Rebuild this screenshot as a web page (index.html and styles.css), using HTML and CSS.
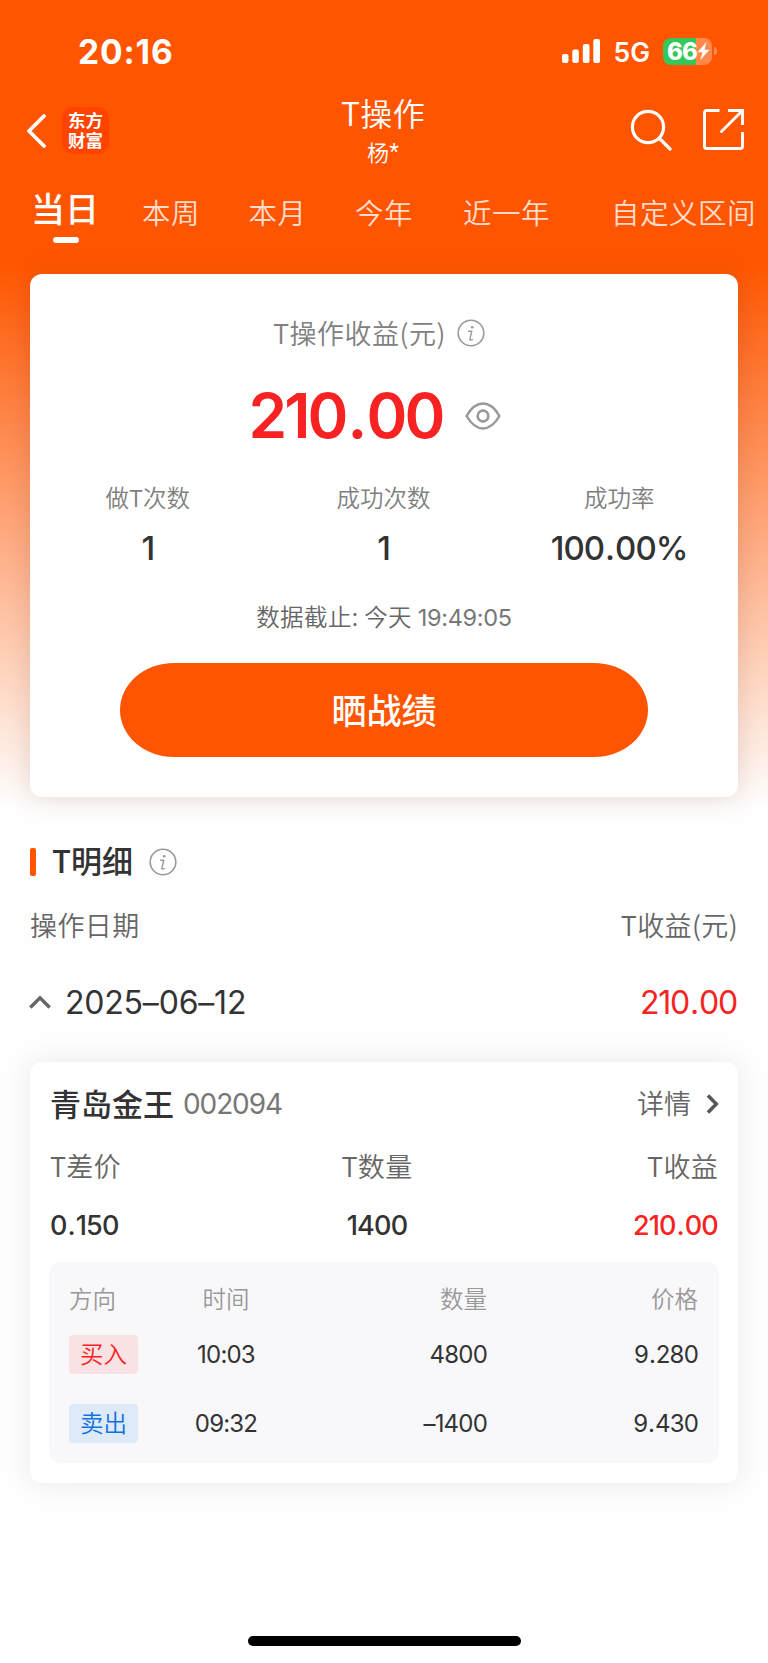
FILE: index.html
```html
<!DOCTYPE html>
<html lang="zh-CN">
<head>
<meta charset="utf-8">
<title>T操作</title>
<link rel="stylesheet" href="styles.css">
</head>
<body>
<div class="screen">
  <header class="status">
    <span class="clock">20:16</span>
    <div class="status-right">
      <svg class="signal" width="40" height="26" viewBox="0 0 40 26"><g fill="#fff"><rect x="1" y="16" width="6.500" height="9" rx="2"/><rect x="11.300" y="11.500" width="6.500" height="13.500" rx="2"/><rect x="21.800" y="6" width="6.700" height="19" rx="2"/><rect x="32.300" y="1" width="6.700" height="24" rx="2"/></g></svg>
      <span class="net">5G</span>
      <div class="battery"><span class="battery-num">66</span><svg class="bolt" width="13" height="20" viewBox="0 0 13 20"><path d="M9.500 1 .5 11.300h5L3.300 19 12.500 8.700h-5z" fill="#fff"/></svg></div>
      <span class="nub"></span>
    </div>
  </header>

  <nav class="navbar">
    <div class="nav-left">
      <svg width="20" height="36" viewBox="0 0 20 36"><path d="M18 3 3 18 18 33" fill="none" stroke="#fff" stroke-width="3.800" stroke-linecap="round" stroke-linejoin="round"/></svg>
      <div class="logo">东方<br>财富</div>
    </div>
    <div class="nav-title"><h1>T操作</h1><p>杨<span class="star">*</span></p></div>
    <div class="nav-right">
      <svg width="44" height="44" viewBox="0 0 44 44"><g fill="none" stroke="#fff" stroke-width="3.200" stroke-linecap="round"><circle cx="19" cy="19" r="15.600"/><path d="M30.500 30.500 41 41"/></g></svg>
      <svg width="42" height="42" viewBox="0 0 42 42"><g fill="none" stroke="#fff" stroke-width="2.900"><path d="M17.500 2.500H4.500a2 2 0 0 0-2 2v34a2 2 0 0 0 2 2h34a2 2 0 0 0 2-2V24"/><path d="M26 2.500h14.500V17"/><path d="M39.500 3.500 19.500 23.500" stroke-linecap="round"/></g></svg>
    </div>
  </nav>

  <div class="tabs">
    <span class="tab active">当日</span>
    <span class="tab">本周</span>
    <span class="tab">本月</span>
    <span class="tab">今年</span>
    <span class="tab year">近一年</span>
    <span class="tab custom">自定义区间</span>
  </div>

  <section class="card summary">
    <div class="sum-label"><span>T操作收益(元)</span>
      <svg width="28" height="28" viewBox="0 0 28 28"><use href="#info"/></svg>
    </div>
    <div class="sum-value"><span class="amount">210<span class="dot">.</span>00</span>
      <svg width="36" height="28" viewBox="0 0 36 28"><g fill="none" stroke="#999" stroke-width="2.500"><path d="M1.600 14C6.500 5.500 11.500 1.600 18 1.600S29.500 5.500 34.400 14C29.500 22.500 24.500 26.400 18 26.400S6.500 22.500 1.600 14z" stroke-linejoin="round"/><circle cx="18" cy="14" r="5.300" stroke-width="2.700"/></g></svg>
    </div>
    <div class="stats">
      <div class="stat"><span class="stat-label">做T次数</span><span class="stat-num">1</span></div>
      <div class="stat"><span class="stat-label">成功次数</span><span class="stat-num">1</span></div>
      <div class="stat"><span class="stat-label">成功率</span><span class="stat-num">100<span class="dot">.</span>00%</span></div>
    </div>
    <p class="deadline">数据截止: 今天 <span class="deadline-time">19:49:05</span></p>
    <button class="share">晒战绩</button>
  </section>

  <section class="detail">
    <div class="detail-head">
      <i class="bar"></i><h2>T明细</h2>
      <svg width="28" height="28" viewBox="0 0 28 28"><g id="info"><circle cx="14" cy="14" r="12.800" fill="none" stroke="#999" stroke-width="1.600"/><circle cx="15.200" cy="8.300" r="1.300" fill="#999"/><path d="M11.600 12.200h3.200L12.900 20.200q-.2 1 .8.700l1.800-.3" fill="none" stroke="#999" stroke-width="1.400" stroke-linecap="round" stroke-linejoin="round"/></g></svg>
    </div>
    <div class="cols"><span>操作日期</span><span>T收益(元)</span></div>
    <div class="day">
      <svg width="22" height="14" viewBox="0 0 22 14"><path d="M1.300 12.500 11 2.800 20.700 12.500" fill="none" stroke="#666" stroke-width="3.400"/></svg>
      <span class="date">2025–06–12</span><span class="day-profit">210<span class="dot">.</span>00</span>
    </div>
  </section>

  <section class="card trade">
    <div class="trade-head">
      <span class="stock">青岛金王</span><span class="code">002094</span>
      <span class="more">详情</span>
      <svg width="13" height="20" viewBox="0 0 13 20"><path d="M2 1.500 10.300 10 2 18.500" fill="none" stroke="#555" stroke-width="3.500"/></svg>
    </div>
    <div class="trio trio-label"><span>T差价</span><span>T数量</span><span>T收益</span></div>
    <div class="trio trio-num"><span>0<span class="dot">.</span>150</span><span>1400</span><span class="red">210<span class="dot">.</span>00</span></div>
    <div class="orders">
      <div class="order order-head"><span>方向</span><span>时间</span><span>数量</span><span>价格</span></div>
      <div class="order"><span><b class="tag buy">买入</b></span><span>10:03</span><span>4800</span><span>9<span class="dot">.</span>280</span></div>
      <div class="order"><span><b class="tag sell">卖出</b></span><span>09:32</span><span>–1400</span><span>9<span class="dot">.</span>430</span></div>
    </div>
  </section>

  <footer class="home"><i></i></footer>
</div>
</body>
</html>
```
FILE: styles.css
```css
* { box-sizing: border-box; margin: 0; padding: 0; }
body { background: #fefefe; font-family: "Noto Sans CJK SC", sans-serif; color: #333; }
svg { display: block; flex: none; }
.screen {
  width: 768px; height: 1663px; display: flex; flex-direction: column; overflow: hidden;
  background: linear-gradient(180deg, #ff5500 0, #ff5500 262px, #fefefe 808px);
}
.dot { margin: 0 .03em; }

/* status bar */
.status { height: 102px; flex: none; padding: 0 51px 0 78px; display: flex; align-items: center; justify-content: space-between; color: #fff; font-family: Inter, sans-serif; }
.clock { font-size: 33.500px; font-weight: 700; letter-spacing: .9px; padding-top: 1px; }
.status-right { display: flex; align-items: center; }
.net { font-size: 26.500px; font-weight: 600; margin: 1px 13px 0 12px; }
.battery { width: 49px; height: 27px; border-radius: 8px; background: linear-gradient(90deg, #34c759 33px, #ff884d 33px); display: flex; align-items: center; padding-left: 4px; }
.battery-num { font-size: 24px; font-weight: 800; letter-spacing: -.8px; line-height: 27px; }
.nub { width: 3px; height: 8px; margin-left: 2px; border-radius: 0 3px 3px 0; background: #ff884d; }

/* navigation */
.navbar { height: 78px; flex: none; display: grid; grid-template-columns: 1fr 1fr 1fr; padding: 0 23px 0 26px; color: #fff; }
.nav-left { display: flex; align-items: center; gap: 16px; padding-bottom: 21px; }
.logo { width: 47px; height: 47px; border-radius: 11px; background: #ff4400; padding-top: 3px; text-align: center; font-size: 17.500px; font-weight: 700; line-height: 19.500px; }
.nav-title { text-align: center; padding-right: 5px; }
.nav-title h1 { font-size: 32px; font-weight: 350; letter-spacing: .3px; line-height: 20px; }
.nav-title p { font-size: 22px; line-height: 30px; margin-top: 14px; font-weight: 350; }
.star { font-family: "Liberation Sans", sans-serif; font-size: 25px; line-height: 20px; }
.nav-right { display: flex; justify-content: flex-end; gap: 29px; padding: 6px 1px 0 0; }

/* period tabs */
.tabs { height: 94px; flex: none; display: flex; padding-left: 31px; white-space: nowrap; }
.tab { font-size: 28.500px; letter-spacing: .5px; line-height: 64px; color: #ffdccb; margin-left: 48.500px; font-weight: 350; }
.tab.active { font-size: 34px; font-weight: 500; color: #fff; margin-left: 0; line-height: 55px; width: 68px; letter-spacing: 0; }
.tab.active::after { content: ""; display: block; width: 26px; height: 6px; margin: 2px 0 0 22px; border-radius: 3px; background: #fff; }
.tab.active + .tab { margin-left: 43px; }
.tab.year { margin-left: 50px; }
.tab.custom { margin-left: 61px; }

/* cards */
.card { margin: 0 30px; flex: none; background: #fff; border-radius: 12px; }
.summary { height: 523px; padding-top: 37px; box-shadow: 0 2px 26px rgba(80, 30, 0, .14); }
.sum-label { height: 43px; display: flex; align-items: center; justify-content: center; gap: 11px; font-size: 27px; letter-spacing: .5px; font-weight: 350; color: #808080; padding-right: 10px; }
.sum-value { height: 123px; display: flex; align-items: center; justify-content: center; gap: 22px; padding-right: 19px; }
.amount { font-family: Inter, sans-serif; font-size: 62px; font-weight: 600; color: #f72323; letter-spacing: -2.800px; }
.stats { display: grid; grid-template-columns: repeat(3, 1fr); padding-right: 1px; margin-top: -1px; }
.stat { display: flex; flex-direction: column; align-items: center; }
.stat-label { font-size: 23.500px; line-height: 42px; font-weight: 350; color: #808080; }
.stat-num { font-family: Inter, sans-serif; font-size: 33px; line-height: 60px; font-weight: 500; color: #333; letter-spacing: -1px; }
.deadline { height: 78px; line-height: 76px; text-align: center; font-size: 23.500px; letter-spacing: .4px; font-weight: 350; color: #666; white-space: pre; }
.deadline-time { font-family: Inter, sans-serif; font-weight: 400; letter-spacing: -.3px; color: #777; }
.share { display: block; width: 528px; height: 94px; margin: 7px auto 0; border: 0; border-radius: 54px / 47px; background: #ff5500; color: #fff; font: 500 35px/90px "Noto Sans CJK SC", sans-serif; padding-bottom: 3px; }

/* detail list */
.detail { flex: none; padding: 34px 30px 0; }
.detail-head { height: 61px; display: flex; align-items: center; }
.bar { width: 6px; height: 28px; border-radius: 2px; background: #ff5500; }
.detail-head h2 { font-size: 31px; font-weight: 500; margin: -4px 16px 0 16px; }
.cols { height: 64px; margin-bottom: 2px; display: flex; align-items: center; justify-content: space-between; font-size: 27px; letter-spacing: .4px; font-weight: 350; color: #666; }
.day { height: 88px; display: flex; align-items: center; font-family: Inter, sans-serif; font-size: 32px; font-weight: 400; }
.day svg { margin-left: -1px; }
.date { margin-left: 14px; letter-spacing: -.2px; }
.day-profit { margin-left: auto; color: #f72323; letter-spacing: -1.200px; padding-right: 1px; }

/* trade card */
.trade { height: 421px; margin-top: 16px; padding: 12px 19px 0; box-shadow: 0 0 30px rgba(0, 0, 0, .09); }
.trade-head { height: 60px; display: flex; align-items: center; padding: 0 0 0 1px; }
.stock { font-size: 31px; font-weight: 500; margin-top: -4px; }
.code { font-family: Inter, sans-serif; font-size: 28px; font-weight: 400; color: #777; margin-left: 9px; letter-spacing: -1.100px; }
.more { margin: -3px 15px 0 auto; font-size: 27px; font-weight: 350; color: #666; }
.trio { display: grid; grid-template-columns: repeat(3, 1fr); padding: 0 1px; align-items: center; }
.trio > :nth-child(2) { text-align: center; padding-right: 14px; }
.trio > :nth-child(3) { text-align: right; }
.trio-label { height: 62px; margin-bottom: 2px; font-size: 27px; letter-spacing: .3px; font-weight: 350; color: #666; }
.trio-num { height: 54px; font-family: Inter, sans-serif; font-size: 27px; font-weight: 500; letter-spacing: -.8px; }
.red { color: #f72323; }
.orders { height: 201px; margin-top: 10px; padding: 9px 21px 0 20px; border-radius: 12px; background: #f8f8fa; }
.order { height: 55px; display: grid; grid-template-columns: 96px 122px 200px 1fr; align-items: center; font-family: Inter, sans-serif; font-size: 24px; font-weight: 400; letter-spacing: -.8px; }
.order + .order + .order { margin-top: 14px; }
.order > :nth-child(2) { text-align: center; }
.order > :nth-child(n+3) { text-align: right; }
.order-head { height: 54px; margin-bottom: 2px; font-family: "Noto Sans CJK SC", sans-serif; font-size: 23.500px; font-weight: 350; color: #999; letter-spacing: 0; }
.tag { display: block; width: 69px; height: 39px; line-height: 37px; border-radius: 4px; text-align: center; font-family: "Noto Sans CJK SC", sans-serif; font-size: 23.500px; font-weight: 350; letter-spacing: 0; }
.buy { color: #f72323; background: #f8e2e4; }
.sell { color: #1072e0; background: #deeaf7; }

/* home indicator */
.home { margin-top: auto; padding-bottom: 17px; display: flex; justify-content: center; }
.home i { width: 273px; height: 10px; border-radius: 5px; background: #000; }
```
